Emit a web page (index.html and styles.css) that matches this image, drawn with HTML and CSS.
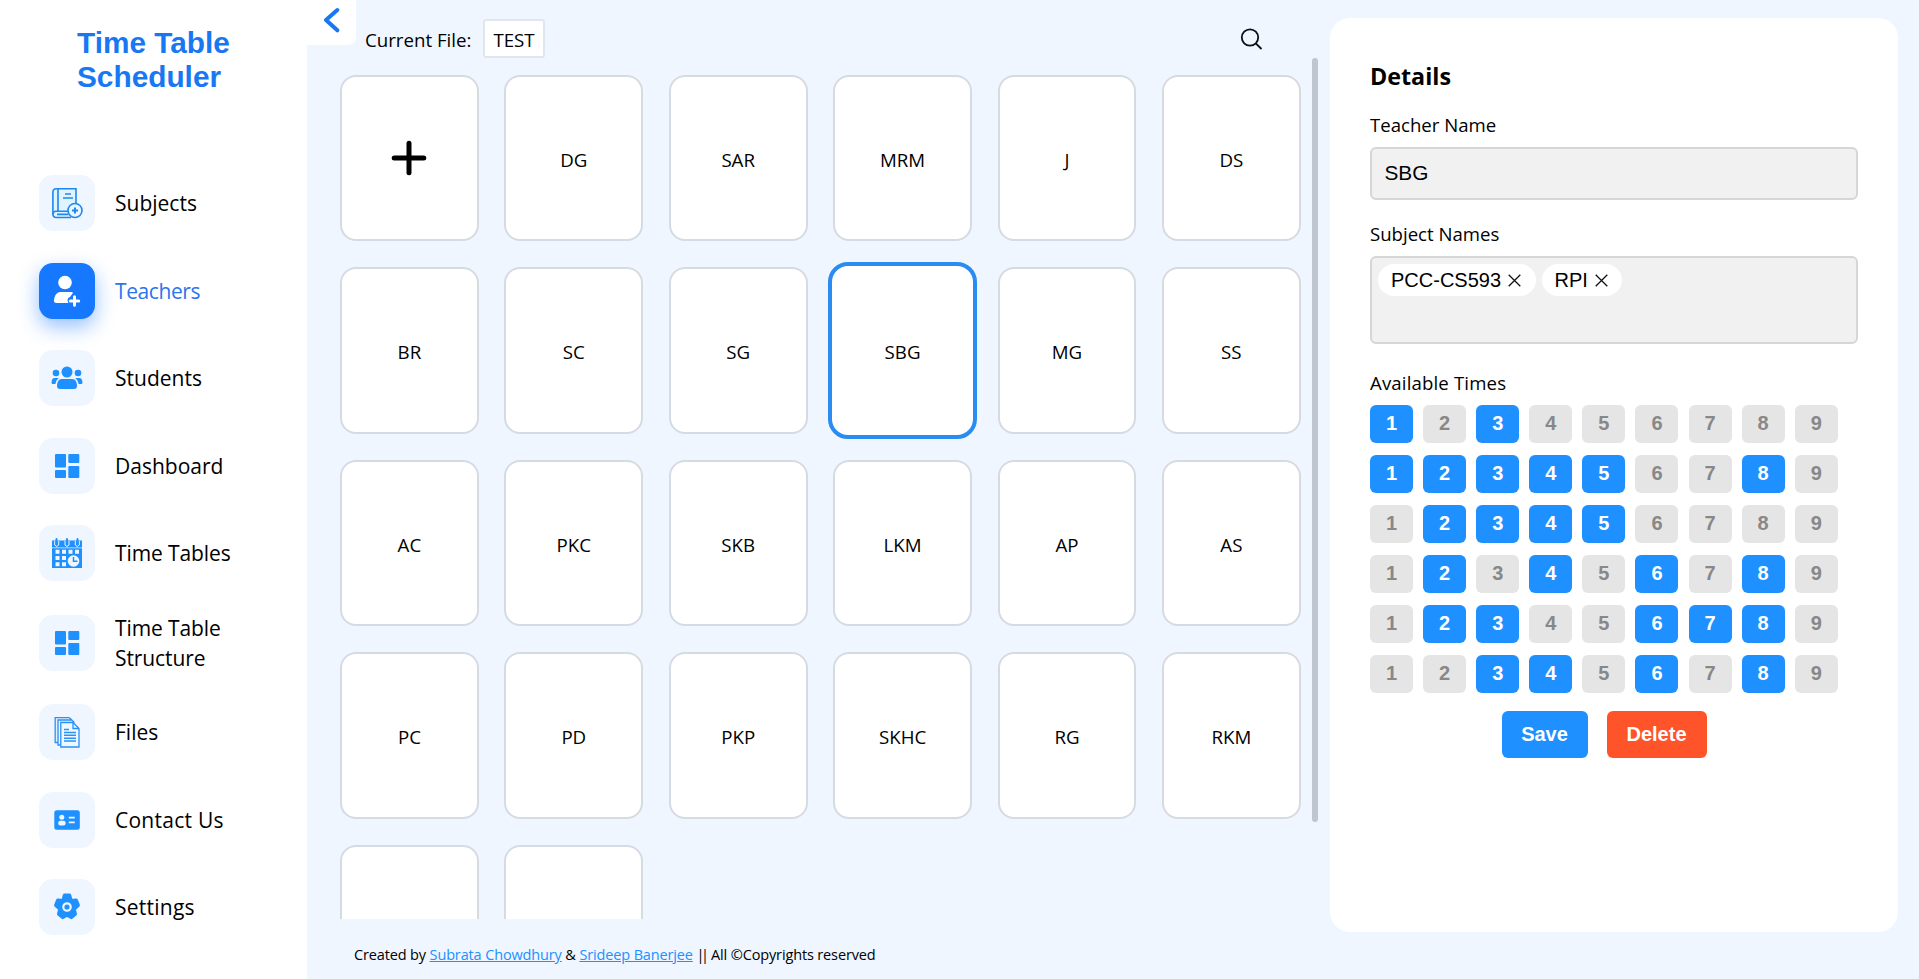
FILE: index.html
```html
<!DOCTYPE html>
<html lang="en">
<head>
<meta charset="utf-8">
<title>Time Table Scheduler</title>
<link rel="stylesheet" href="styles.css">
</head>
<body>
<div class="app">
  <aside class="sidebar">
    <h1 class="brand">Time Table Scheduler</h1>
    <nav class="menu">
      <a class="item"><span class="icon"><svg width="32" height="32" viewBox="0 0 32 32" fill="none" stroke="#1e88ee" stroke-width="1.6"><path fill="#e0f4ff" d="M25 17V1.800H5A3 3 0 0 0 1.900 5v22.500A3 3 0 0 0 5 30.500H20"/><path d="M7 2v22M19 24.200H5a3 3 0 0 0-3 3M6 27.400h11.500M14 7h6M12 11h10"/><circle cx="24" cy="23.500" r="7" fill="#e8f6ff"/><path stroke-width="2" d="M24 20.500v6M21 23.500h6"/></svg></span><span class="label">Subjects</span></a>
      <a class="item active"><span class="icon"><svg width="32" height="32" viewBox="0 0 32 32" fill="#fff"><circle cx="14" cy="7.500" r="6.800"/><path d="M9.500 17h11c1.400 0 1.800.8.900 1.800l-1.300 1.600c-.5.600-.9 1.500-1.600 1.800-2 .7-2.500 3-1.300 4.800V28H5.500c-2 0-2.800-1-2.500-3 .6-5 3-8 6.500-8z"/><path fill="none" stroke="#fff" stroke-width="3" stroke-linecap="round" d="M23.500 21.800v8.400M19.300 26h8.400"/></svg></span><span class="label tight">Teachers</span></a>
      <a class="item"><span class="icon"><svg width="32" height="32" viewBox="0 0 32 32" fill="#1e90ff"><circle cx="16" cy="10" r="5.500"/><circle cx="5" cy="11" r="3.300"/><circle cx="27" cy="11" r="3.300"/><path d="M10.500 17h11c2.800 0 4.500 3 4.500 7 0 2-1 3-3 3H9c-2 0-3-1-3-3 0-4 1.700-7 4.500-7z"/><path d="M3.500 16h4.300C5.500 17.800 4.700 20 4.500 22H1.600C.5 22 .5 21 .6 20 .8 17.500 1.800 16 3.500 16zM28.500 16h-4.300c2.300 1.800 3.100 4 3.300 6h2.900c1.100 0 1.100-1 1-2-.2-2.500-1.200-4-2.900-4z"/></svg></span><span class="label">Students</span></a>
      <a class="item"><span class="icon"><svg width="32" height="32" viewBox="0 0 32 32" fill="#1e90ff"><rect x="4" y="4" width="11" height="13.500" rx="1"/><rect x="17.300" y="4" width="11" height="9" rx="1"/><rect x="4" y="20" width="11" height="8" rx="1"/><rect x="17.300" y="16" width="11" height="12" rx="1"/></svg></span><span class="label">Dashboard</span></a>
      <a class="item"><span class="icon"><svg width="32" height="32" viewBox="0 0 32 32"><path fill="#1e90ff" d="M1 3.500h30v7H1zM1 11.300h30V31H1z"/><g fill="none" stroke="#eff6ff" stroke-width="1"><path d="M3.700 4v4q2 3 4 0V4M14 4v4q2 3 4 0V4M24.300 4v4q2 3 4 0V4"/></g><path fill="none" stroke="#1e90ff" stroke-width="2" stroke-linecap="round" d="M5.500 2v5M16 2v5M26.500 2v5"/><path fill="#eff6ff" d="M4.500 12.800h4v4h-4zM11 12.800h4v4h-4zM17.500 12.800h4v4h-4zM24 12.800h4v4h-4zM4.500 19h4v4h-4zM11 19h4v4h-4zM4.500 25.200h4v4h-4zM11 25.200h4v4h-4z"/><circle cx="22.500" cy="24" r="5.800" fill="#eff6ff"/><path fill="none" stroke="#1e90ff" stroke-width="1.500" d="M22.500 20v4.200h4"/></svg></span><span class="label tight-xs">Time Tables</span></a>
      <a class="item"><span class="icon"><svg width="32" height="32" viewBox="0 0 32 32" fill="#1e90ff"><rect x="4" y="4" width="11" height="13.500" rx="1"/><rect x="17.300" y="4" width="11" height="9" rx="1"/><rect x="4" y="20" width="11" height="8" rx="1"/><rect x="17.300" y="16" width="11" height="12" rx="1"/></svg></span><span class="label tight-xs">Time Table Structure</span></a>
      <a class="item"><span class="icon"><svg width="32" height="32" viewBox="0 0 32 32" fill="none" stroke="#2c90f5" stroke-width="1.300"><path fill="#e2f4ff" d="M7 26.500H4.200V1.600H18l3 2.400M9.800 29H7V4h13.500l3 2.400"/><path fill="#eef8ff" d="M9.800 6.500H22l6 6V31H9.800z"/><path d="M22 6.500v6h6"/><path stroke-width="1.500" d="M13 13.500h5M13 16.500h12M13 19.300h12M13 22.200h12M13 25h12"/></svg></span><span class="label">Files</span></a>
      <a class="item"><span class="icon"><svg width="32" height="32" viewBox="0 0 32 32"><rect x="3.300" y="6.200" width="25.500" height="19.500" rx="2.500" fill="#1e90ff"/><g fill="#eff6ff"><circle cx="10.800" cy="13.200" r="2.500"/><rect x="7.200" y="16.800" width="7.400" height="4.600" rx="2.200"/><path d="M17.800 12.700h6v1.800h-6zM17.800 17.400h6v1.800h-6z"/></g></svg></span><span class="label wide">Contact Us</span></a>
      <a class="item"><span class="icon"><svg width="32" height="32" viewBox="0 0 32 32"><g fill="#1e90ff" stroke="#1e90ff" stroke-width="4" stroke-linejoin="round"><path d="M13.700 4.500h4.600l1.500 5.500 5.300-.4 1.800 4.700-4.200 3.600 1.300 5-3.700 3.200L16 23.800l-4.300 2.300L8 22.900l1.300-5-4.200-3.600 1.800-4.700 5.300.4z"/></g><circle cx="16" cy="16" r="3.700" fill="none" stroke="#eff6ff" stroke-width="2.200"/></svg></span><span class="label wide">Settings</span></a>
    </nav>
  </aside>

  <main class="main">
    <header class="topbar">
      <button class="back" aria-label="Back"><svg width="17" height="26" viewBox="0 0 17 26" fill="none" stroke="#1877f2" stroke-width="4" stroke-linecap="round" stroke-linejoin="round"><path d="M14.300 3 3 13l11.300 10.300"/></svg></button>
      <span class="current">Current File:</span>
      <span class="file">TEST</span>
      <svg class="search" width="24" height="24" viewBox="0 0 24 24" fill="none" stroke="#0b0f14" stroke-width="1.800"><circle cx="11" cy="10.500" r="8.200"/><path d="m16.800 16.300 5.700 5.700"/></svg>
    </header>
    <div class="scroll">
      <div class="cards">
        <div class="card"><svg width="36" height="36" viewBox="0 0 36 36" stroke="#000" stroke-width="5" stroke-linecap="round"><path d="M18 3.200v29.600M3.200 18h29.600"/></svg></div>
        <div class="card">DG</div><div class="card">SAR</div><div class="card">MRM</div><div class="card">J</div><div class="card">DS</div>
        <div class="card">BR</div><div class="card">SC</div><div class="card">SG</div><div class="card selected">SBG</div><div class="card">MG</div><div class="card">SS</div>
        <div class="card">AC</div><div class="card">PKC</div><div class="card">SKB</div><div class="card">LKM</div><div class="card">AP</div><div class="card">AS</div>
        <div class="card">PC</div><div class="card">PD</div><div class="card">PKP</div><div class="card">SKHC</div><div class="card">RG</div><div class="card">RKM</div>
        <div class="card"></div><div class="card"></div>
      </div>
      <div class="thumb"></div>
    </div>
    <footer class="footer">Created by <a>Subrata Chowdhury</a> &amp; <a>Srideep Banerjee</a> <span class="bars">||</span> All ©Copyrights reserved</footer>
  </main>

  <section class="details">
    <h2 class="heading">Details</h2>
    <div class="caption">Teacher Name</div>
    <div class="field name">SBG</div>
    <div class="caption">Subject Names</div>
    <div class="field subjects">
      <span class="chip">PCC-CS593<svg width="13" height="13" viewBox="0 0 13 13" stroke="#111" stroke-width="1.300"><path d="m.7.700 11.600 11.600M12.300.7.700 12.300"/></svg></span>
      <span class="chip">RPI<svg width="13" height="13" viewBox="0 0 13 13" stroke="#111" stroke-width="1.300"><path d="m.7.700 11.600 11.600M12.300.7.700 12.300"/></svg></span>
    </div>
    <div class="caption times">Available Times</div>
    <div class="slots">
      <b class="on">1</b><b>2</b><b class="on">3</b><b>4</b><b>5</b><b>6</b><b>7</b><b>8</b><b>9</b>
      <b class="on">1</b><b class="on">2</b><b class="on">3</b><b class="on">4</b><b class="on">5</b><b>6</b><b>7</b><b class="on">8</b><b>9</b>
      <b>1</b><b class="on">2</b><b class="on">3</b><b class="on">4</b><b class="on">5</b><b>6</b><b>7</b><b>8</b><b>9</b>
      <b>1</b><b class="on">2</b><b>3</b><b class="on">4</b><b>5</b><b class="on">6</b><b>7</b><b class="on">8</b><b>9</b>
      <b>1</b><b class="on">2</b><b class="on">3</b><b>4</b><b>5</b><b class="on">6</b><b class="on">7</b><b class="on">8</b><b>9</b>
      <b>1</b><b>2</b><b class="on">3</b><b class="on">4</b><b>5</b><b class="on">6</b><b>7</b><b class="on">8</b><b>9</b>
    </div>
    <div class="actions"><button class="btn save">Save</button><button class="btn delete">Delete</button></div>
  </section>
</div>
</body>
</html>
```
FILE: styles.css
```css
* { box-sizing: border-box; }
body {
  margin: 0;
  font-family: "Open Sans", "Noto Sans", sans-serif;
  color: #000;
  background: #eff6ff;
}
.app { display: flex; width: 1919px; height: 979px; overflow: hidden; }

.sidebar { width: 307px; flex: none; background: #fff; padding: 26px 0 0 39px; }
.brand {
  margin: 0 0 0 38px;
  width: 190px;
  height: 149px;
  font: bold 29.800px/34px "Liberation Sans", Arial, sans-serif;
  color: #1877f2;
}
.menu { display: flex; flex-direction: column; gap: 31.500px; }
.item { display: flex; align-items: center; gap: 20px; min-height: 56px; }
.icon {
  width: 56px;
  height: 56px;
  flex: none;
  display: flex;
  align-items: center;
  justify-content: center;
  border-radius: 14px;
  background: #eff6ff;
}
.label { width: 130px; font-size: 21px; line-height: 30px; }
.tight { letter-spacing: -.4px; }
.tight-xs { letter-spacing: -.1px; }
.wide { letter-spacing: .25px; }
.active .icon { background: #1677ff; box-shadow: 0 8px 20px rgba(22, 119, 255, .45); }
.active .label { color: #2b74f0; }

.main { width: 1023px; flex: none; display: flex; flex-direction: column; }
.topbar { height: 58px; flex: none; display: flex; align-items: flex-start; }
.back {
  width: 49px;
  height: 45px;
  padding: 0 0 5px 16px;
  border: 0;
  border-radius: 0 0 8px 0;
  background: #fff;
  text-align: left;
}
.back svg { display: block; }
.current { margin: 26.500px 0 0 9px; width: 118px; font-size: 18.700px; line-height: 26px; white-space: nowrap; }
.file {
  width: 62px;
  height: 39px;
  margin-top: 19px;
  border: 2px solid #e2e6eb;
  border-radius: 3px;
  background: #fff;
  font-size: 18.700px;
  line-height: 37px;
  text-align: center;
}
.search { margin: 26.500px 0 0 694px; }

.scroll { height: 861px; display: flex; align-items: flex-start; overflow: hidden; }
.cards {
  width: 1005px;
  padding: 16.600px 0 0 33px;
  display: grid;
  grid-template-columns: repeat(6, 138.800px);
  grid-auto-rows: 166.900px;
  gap: 25.600px;
}
.card {
  display: flex;
  align-items: center;
  justify-content: center;
  padding-top: 2px;
  border: 2px solid #d6dbe1;
  border-radius: 16px;
  background: #fff;
  font-size: 18.700px;
}
.card svg { margin-top: -3px; }
.selected { margin: -5.500px; border: 4px solid #2a8cf0; border-radius: 20px; }
.thumb { width: 6px; height: 764px; border-radius: 3px; background: #bfc6cd; }
.footer { padding: 25px 0 0 47px; font-size: 14.500px; letter-spacing: -.14px; line-height: 22px; white-space: nowrap; }
.footer a { color: #1e90ff; text-decoration: underline; }
.bars { letter-spacing: -3.500px; margin-right: 2px; }

.details {
  width: 568px;
  height: 914px;
  margin-top: 18px;
  padding: 40px 40px 0;
  border-radius: 20px;
  background: #fff;
}
.heading { margin: 0; font-size: 23.300px; line-height: 36px; }
.caption { margin-top: 17px; font-size: 18.600px; line-height: 28px; white-space: nowrap; }
.field {
  margin-top: 8px;
  border: 2px solid #d6d6d6;
  border-radius: 6px;
  background: #f1f1f1;
  font-family: "Liberation Sans", Arial, sans-serif;
}
.name { height: 53px; padding-left: 12.500px; font-size: 20.800px; line-height: 47px; margin-bottom: 20px; }
.subjects { height: 88px; padding: 6px; display: flex; align-items: flex-start; gap: 6px; }
.chip {
  display: flex;
  align-items: center;
  gap: 7px;
  height: 32px;
  padding: 0 14.500px 0 13px;
  border-radius: 16px;
  background: #fff;
  font-size: 20px;
}
.times { margin-top: 25px; letter-spacing: .15px; }
.slots {
  margin-top: 8px;
  display: grid;
  grid-template-columns: repeat(9, 43px);
  grid-auto-rows: 38px;
  gap: 12px 10.100px;
}
.slots b {
  border-radius: 6px;
  background: #e5e5e5;
  color: #888;
  font: bold 20px/36px "Liberation Sans", Arial, sans-serif;
  text-align: center;
}
.slots .on { background: #1e90ff; color: #fff; }
.actions { display: flex; justify-content: center; gap: 19px; margin: 18px 20px 0 0; }
.btn {
  height: 47px;
  padding: 0;
  border: 0;
  border-radius: 6px;
  color: #fff;
  font: bold 20px "Liberation Sans", Arial, sans-serif;
}
.save { width: 86px; background: #1e90ff; }
.delete { width: 100px; background: #ff5429; }
```
